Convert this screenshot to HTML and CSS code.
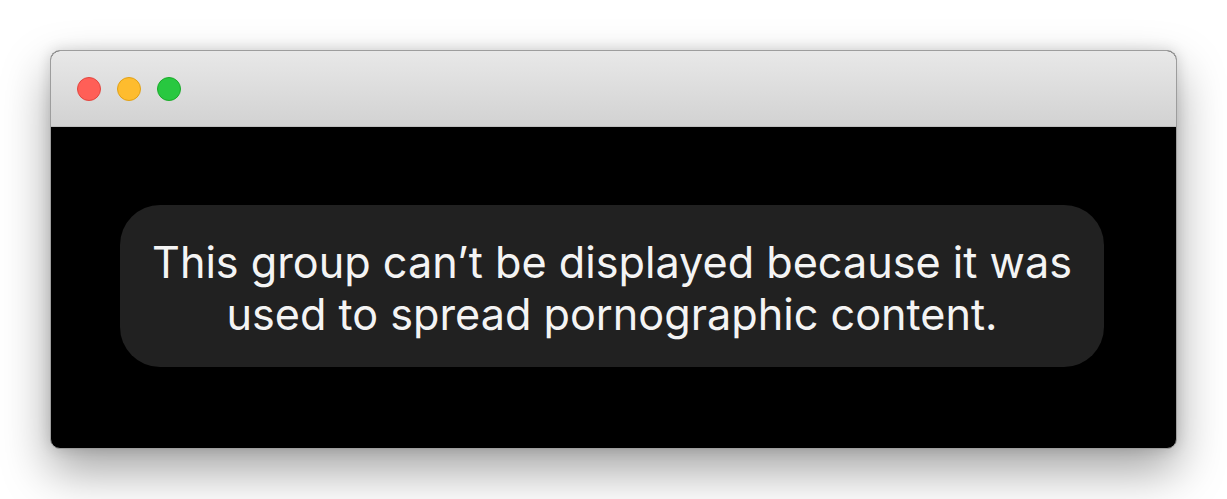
FILE: index.html
```html
<!DOCTYPE html>
<html lang="en">

<head>
    <meta charset="UTF-8" />
    <meta name="viewport" content="width=device-width, initial-scale=1.0" />
    <title>Group unavailable</title>
    <link rel="stylesheet" href="styles.css">
</head>

<body>
    <div class="window">
        <div class="titlebar">
            <span class="light red"></span>
            <span class="light yellow"></span>
            <span class="light green"></span>
        </div>
        <div class="content">
            <div class="notice">
                This group can’t be displayed because it was<br>used to spread pornographic content.
            </div>
        </div>
    </div>
</body>

</html>
```
FILE: styles.css
```css
html,
body {
    height: 100%;
}

body {
    margin: 0;
    padding: 50px 0 50px 50px;
    box-sizing: border-box;
    background-color: #fff;
    font-family: Inter, "Noto Sans", sans-serif;
}

.window {
    width: 1127px;
    height: 399px;
    box-sizing: border-box;
    border: 1px solid #9d9d9d;
    border-radius: 10px;
    overflow: hidden;
    display: flex;
    flex-direction: column;
    background-color: #000;
    box-shadow: 0 22px 48px rgba(0, 0, 0, 0.36), 0 0 14px rgba(0, 0, 0, 0.14);
}

.titlebar {
    height: 75px;
    flex: none;
    display: flex;
    align-items: center;
    gap: 16px;
    padding-left: 26px;
    background: linear-gradient(#e8e8e8, #d2d2d2);
    border-bottom: 1px solid #bdbdbd;
}

.light {
    width: 24px;
    height: 24px;
    border-radius: 50%;
    box-sizing: border-box;
}

.red {
    background-color: #ff5f57;
    border: 1px solid #e2463f;
}

.yellow {
    background-color: #febc2e;
    border: 1px solid #e1a116;
}

.green {
    background-color: #28c840;
    border: 1px solid #1aab29;
}

.content {
    flex: 1;
    display: flex;
    align-items: center;
    justify-content: center;
    padding: 0 3px 3px 0;
}

.notice {
    width: 984px;
    height: 162px;
    box-sizing: border-box;
    padding-top: 3px;
    border-radius: 40px;
    background-color: #212121;
    color: #f4f4f4;
    font-size: 43.2px;
    line-height: 52px;
    text-align: center;
    display: flex;
    align-items: center;
    justify-content: center;
}
```
